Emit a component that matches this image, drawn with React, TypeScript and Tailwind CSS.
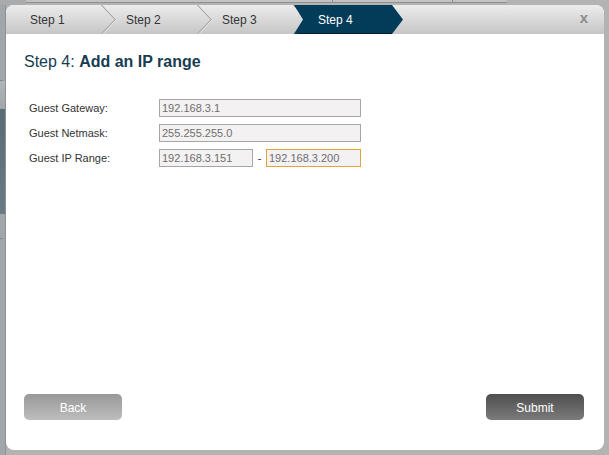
import React from "react";

const tabs = ["Step 1", "Step 2", "Step 3"];

function Chevron() {
  return (
    <svg className="absolute left-[95px] top-0 z-10" width="16" height="29" viewBox="0 0 16 29">
      <polyline points="0.5,0 14.5,14.5 0.5,29" fill="none" stroke="#a9a9a9" strokeWidth="1.2" />
      <polyline points="1.8,0 15.6,14.5 1.8,29" fill="none" stroke="#f2f2f2" strokeWidth="0.8" />
    </svg>
  );
}

function Field({ value, focused, w }: { value: string; focused?: boolean; w: string }) {
  return (
    <input
      readOnly
      value={value}
      className={`${w} h-[18px] border ${
        focused ? "border-[#e2a33c]" : "border-[#a6a6a6]"
      } bg-[#f3f1f1] pl-[2px] text-[11px] text-[#6e6e6e] outline-none`}
    />
  );
}

export default function App() {
  return (
    <div
      className="flex h-[455px] w-[609px] flex-col bg-[#b3b3b3]"
      style={{ fontFamily: '"Liberation Sans", Arial, sans-serif' }}
    >
      {/* background window strip at the top */}
      <div className="flex h-[5px] shrink-0">
        <div className="w-[26px] bg-[#a9abac]" />
        <div className="flex h-[3px] w-[481px] border-b border-[#8e8e8e] bg-[#c2c2c2]">
          <div className="w-[307px] border-r border-[#909090]" />
          <div className="w-[120px] border-r border-[#909090]" />
        </div>
      </div>

      <div className="flex flex-1">
        {/* left sidebar behind the dialog */}
        <div className="flex w-[6px] flex-col border-r border-[#8d9193] bg-[#a3a6a8]">
          <div className="h-[75px]" />
          <div className="h-[1px] w-[3px] bg-[#80868a]" />
          <div className="h-[28px] bg-gradient-to-b from-[#b2b5b7] to-[#a3a6a8]" />
          <div className="h-[105px] bg-gradient-to-b from-[#5b6b76] to-[#6b7b86]" />
          <div className="h-[24px]" />
          <div className="h-[1px] w-[3px] bg-[#80868a]" />
        </div>

        {/* dialog */}
        <div className="mb-[5px] mr-[5px] flex flex-1 flex-col overflow-hidden rounded-[8px] bg-white">
          <div className="relative flex h-[29px] shrink-0 items-center bg-gradient-to-b from-[#ececec] to-[#c6c6c6] text-[12px] text-[#333]">
            {tabs.map((t) => (
              <div key={t} className="relative flex h-full w-[96px] items-center pl-[24px]">
                {t}
                <Chevron />
              </div>
            ))}
            <div className="relative z-20 flex h-full w-[110px] items-center pl-[24px] text-white">
              <svg className="absolute left-0 top-0" width="110" height="29" viewBox="0 0 110 29">
                <polygon points="0,0 98,0 109,14.5 98,29 0,29 9,14.5" fill="#023c59" />
                <line x1="4" y1="28.5" x2="98" y2="28.5" stroke="#00202f" strokeWidth="1" />
              </svg>
              <span className="relative">Step 4</span>
            </div>
            <div className="ml-auto pb-[3px] pr-[16px] text-[15px] font-bold text-[#8a8a8a]">x</div>
          </div>

          <div className="flex flex-1 flex-col pl-[18px] pt-[19px]">
            <div className="text-[16px] leading-[18px] text-[#183c52]">
              Step 4: <span className="font-bold">Add an IP range</span>
            </div>

            <div className="mt-[28px] flex flex-col gap-[7px] pl-[5px] text-[11px] text-[#333]">
              <div className="flex h-[18px] items-center">
                <div className="w-[130px]">Guest Gateway:</div>
                <Field value="192.168.3.1" w="w-[202px]" />
              </div>
              <div className="flex h-[18px] items-center">
                <div className="w-[130px]">Guest Netmask:</div>
                <Field value="255.255.255.0" w="w-[202px]" />
              </div>
              <div className="flex h-[18px] items-center">
                <div className="w-[130px]">Guest IP Range:</div>
                <Field value="192.168.3.151" w="w-[94px]" />
                <div className="w-[13px] text-center">-</div>
                <Field value="192.168.3.200" focused w="w-[95px]" />
              </div>
            </div>

            <div className="mt-auto flex items-center justify-between pb-[30px] pr-[20px]">
              <button className="h-[26px] w-[98px] rounded-[5px] bg-gradient-to-b from-[#989898] to-[#bebebe] pt-[2px] text-[12px] text-white">
                Back
              </button>
              <button className="h-[26px] w-[98px] rounded-[5px] bg-gradient-to-b from-[#4f4f4f] to-[#7b7b7b] pt-[2px] text-[12px] text-white">
                Submit
              </button>
            </div>
          </div>
        </div>
      </div>
    </div>
  );
}
